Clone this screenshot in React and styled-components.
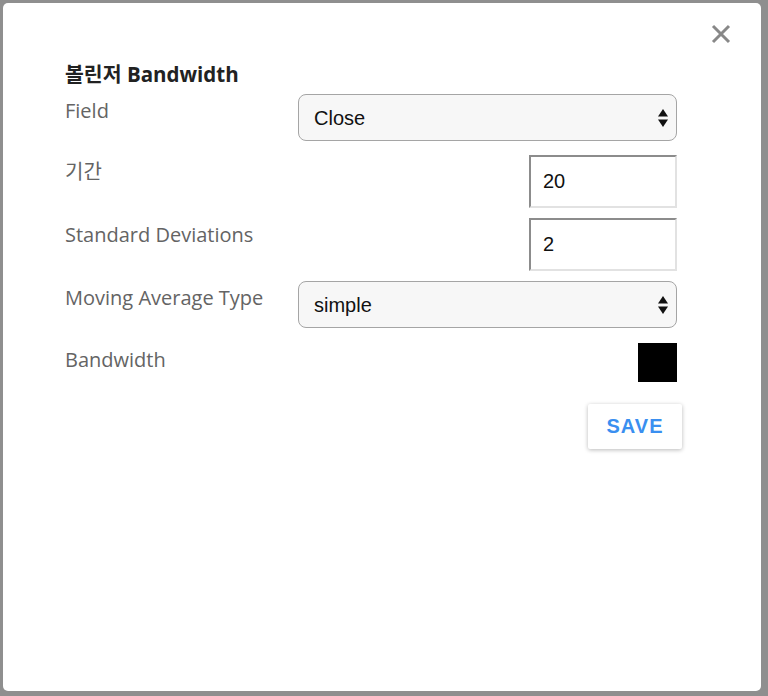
import styled, { createGlobalStyle } from 'styled-components';

const GlobalStyle = createGlobalStyle`
  html, body {
    margin: 0;
    padding: 0;
    background: #8f8f8f;
  }
  * {
    box-sizing: border-box;
  }
`;

const Overlay = styled.div`
  width: 768px;
  height: 696px;
  padding: 3px 7px 5px 3px;
  background: #8f8f8f;
  display: flex;
`;

const Modal = styled.div`
  position: relative;
  flex: 1;
  background: #fff;
  border-radius: 5px;
  padding: 57px 84px 0 62px;
  font-family: "Open Sans", "Noto Sans", "Noto Sans CJK KR", sans-serif;
`;

const CloseButton = styled.button`
  position: absolute;
  top: 18px;
  right: 27px;
  width: 26px;
  height: 26px;
  padding: 0;
  border: none;
  background: none;
  cursor: pointer;
  display: flex;
  align-items: center;
  justify-content: center;
`;

const Title = styled.h2`
  margin: 0 0 6px;
  font-size: 20.5px;
  line-height: 28px;
  font-weight: 700;
  color: #222;
  font-family: "Open Sans", "Noto Sans CJK KR", sans-serif;
`;

const Row = styled.div`
  display: flex;
  justify-content: space-between;
  align-items: flex-start;
  margin-bottom: ${(p) => p.$gap}px;
`;

const Label = styled.label`
  padding-top: 4px;
  font-size: 20px;
  line-height: 26px;
  color: #646464;
  font-family: "Open Sans", "Noto Sans CJK KR", sans-serif;
`;

const SelectWrap = styled.div`
  position: relative;
  width: 379px;
  height: 47px;
`;

const Select = styled.select`
  appearance: none;
  width: 100%;
  height: 100%;
  padding: 0 36px 0 15px;
  border: 1px solid #a5a5a5;
  border-radius: 8px;
  background: #f7f7f7;
  font-family: "Liberation Sans", Arial, sans-serif;
  font-size: 20px;
  color: #111;
  outline: none;
`;

const Arrows = styled.svg`
  position: absolute;
  right: 9px;
  top: 50%;
  transform: translateY(-50%);
  pointer-events: none;
`;

const NumberInput = styled.input`
  width: 148px;
  height: 53px;
  padding: 0 12px;
  border-style: solid;
  border-width: 2px;
  border-color: #8c8c8c #e2e2e2 #e2e2e2 #8c8c8c;
  background: #fff;
  font-family: "Liberation Sans", Arial, sans-serif;
  font-size: 20px;
  color: #111;
  outline: none;
`;

const Swatch = styled.div`
  width: 39px;
  height: 39px;
  background: ${(p) => p.$color};
`;

const Actions = styled.div`
  display: flex;
  justify-content: flex-end;
  margin-right: -5px;
  margin-top: 22px;
`;

const SaveButton = styled.button`
  width: 94px;
  height: 45px;
  border: none;
  border-radius: 2px;
  background: #fff;
  box-shadow: 0 1px 4px rgba(0, 0, 0, 0.28);
  color: #3a8ff0;
  font-family: "Liberation Sans", Arial, sans-serif;
  font-weight: 700;
  font-size: 20px;
  letter-spacing: 1px;
  cursor: pointer;
`;

const SelectField = ({ value, options }) => (
  <SelectWrap>
    <Select defaultValue={value}>
      {options.map((o) => (
        <option key={o}>{o}</option>
      ))}
    </Select>
    <Arrows width="10" height="18" viewBox="0 0 10 18">
      <path d="M5 0 L10 7.5 L0 7.5 Z" fill="#111" />
      <path d="M5 18 L10 10.5 L0 10.5 Z" fill="#111" />
    </Arrows>
  </SelectWrap>
);

export default function App() {
  return (
    <>
      <GlobalStyle />
      <Overlay>
        <Modal>
          <CloseButton aria-label="close">
            <svg width="20" height="20" viewBox="0 0 20 20">
              <path d="M2 2 L18 18 M18 2 L2 18" stroke="#888" strokeWidth="3" />
            </svg>
          </CloseButton>
          <Title>볼린저 Bandwidth</Title>
          <Row $gap={14}>
            <Label>Field</Label>
            <SelectField value="Close" options={['Open', 'High', 'Low', 'Close']} />
          </Row>
          <Row $gap={10}>
            <Label>기간</Label>
            <NumberInput defaultValue="20" />
          </Row>
          <Row $gap={10}>
            <Label>Standard Deviations</Label>
            <NumberInput defaultValue="2" />
          </Row>
          <Row $gap={15}>
            <Label>Moving Average Type</Label>
            <SelectField value="simple" options={['simple', 'exponential', 'weighted']} />
          </Row>
          <Row $gap={0}>
            <Label>Bandwidth</Label>
            <Swatch $color="#000" />
          </Row>
          <Actions>
            <SaveButton>SAVE</SaveButton>
          </Actions>
        </Modal>
      </Overlay>
    </>
  );
}
